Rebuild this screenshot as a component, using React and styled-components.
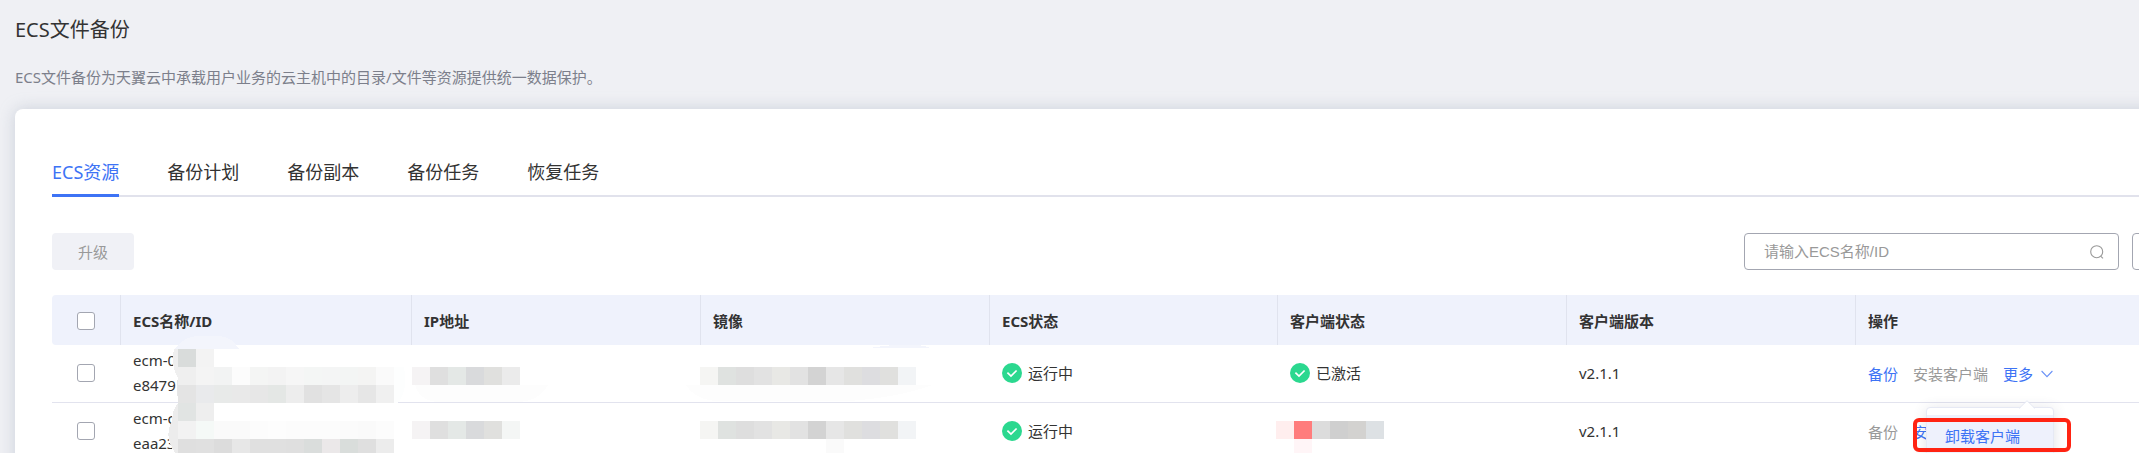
import React from "react";
import styled, { createGlobalStyle } from "styled-components";

const GlobalStyle = createGlobalStyle`
  *, *::before, *::after { box-sizing: border-box; }
  body {
    margin: 0;
    background: #eff0f4;
    color: #333;
    font: 15px/24px "Noto Sans", "Noto Sans CJK SC", sans-serif;
  }
  button, input { font: inherit; color: inherit; }
`;

const Page = styled.main`
  height: 100vh;
  overflow: hidden;
  padding: 15px 0 0 15px;
`;

const Title = styled.h1`
  margin: 0;
  font-size: 20px;
  line-height: 30px;
  font-weight: 400;
`;

const Description = styled.p`
  margin: 20px 0;
  color: #7c7f8b;
`;

/* The panel is wider than the window, so its right side runs out of view. */
const Panel = styled.section`
  margin-right: -67px;
  padding: 48px 37px;
  min-height: 480px;
  background: #fff;
  border-radius: 8px;
  box-shadow: 0 0 16px rgba(150, 160, 180, 0.4);
`;

const Tabs = styled.nav`
  display: flex;
  gap: 48px;
  border-bottom: 2px solid #e1e2ec;
`;

const Tab = styled.a`
  height: 40px;
  margin-bottom: -2px;
  border-bottom: 3px solid ${(p) => (p.$active ? "#3d73f5" : "transparent")};
  color: ${(p) => (p.$active ? "#3d73f5" : "#333")};
  font-size: 18px;
  line-height: 30px;
  text-decoration: none;
`;

const Toolbar = styled.div`
  display: flex;
  justify-content: space-between;
  padding: 36px 0 25px;
`;

const UpgradeButton = styled.button`
  width: 82px;
  height: 37px;
  border: 0;
  border-radius: 4px;
  background: #f0f1f6;
  color: #999;
`;

const Tools = styled.div`
  display: flex;
  gap: 13px;
`;

const SearchBox = styled.label`
  display: flex;
  align-items: center;
  width: 375px;
  height: 37px;
  padding: 0 14px 0 19px;
  border: 1px solid #a3a6b1;
  border-radius: 4px;
`;

const SearchInput = styled.input`
  flex: 1;
  min-width: 0;
  padding: 0;
  border: 0;
  outline: 0;
  background: none;
  font-family: "Liberation Sans", "Noto Sans CJK SC", sans-serif;
  &::placeholder { color: #999; opacity: 1; }
`;

const SquareButton = styled.button`
  width: 37px;
  height: 37px;
  border: 1px solid #a3a6b1;
  border-radius: 4px;
  background: #fff;
`;

const Table = styled.table`
  width: 100%;
  table-layout: fixed;
  border-spacing: 0;
  border-collapse: separate;
`;

const Col = styled.col`
  width: ${(p) => (p.$width ? `${p.$width}px` : "auto")};
`;

const HeadCell = styled.th`
  height: 50px;
  padding: 2px 12px 0;
  background: #eff2fc;
  border-right: 1px solid #e0e3ee;
  text-align: left;
  font-weight: 700;
  &:first-child { border-radius: 4px 0 0 4px; }
  &:last-child { border-right: 0; }
`;

const Cell = styled.td`
  position: relative;
  height: 58px;
  padding: 0 13px 2px 12px;
  border-bottom: 1px solid #e2e3ee;
`;

const Checkbox = styled.input`
  appearance: none;
  display: block;
  width: 18px;
  height: 18px;
  margin: 0 auto;
  border: 1px solid #a3a6b1;
  border-radius: 3px;
  background: #fff;
`;

const Line = styled.div`
  line-height: 25px;
`;

const Status = styled.span`
  display: flex;
  align-items: center;
  gap: 6px;
`;

const Actions = styled.div`
  display: flex;
  align-items: center;
  gap: 15px;
  padding-top: 2px;
`;

const Action = styled.button`
  display: flex;
  align-items: center;
  gap: 8px;
  padding: 0;
  border: 0;
  background: none;
  color: ${(p) => (p.disabled ? "#999" : "#3d73f5")};
`;

const MenuAnchor = styled.div`
  position: relative;
`;

const Menu = styled.div`
  position: absolute;
  z-index: 2;
  top: 45px;
  right: -1px;
  width: 128px;
  padding: 7px 0;
  border: 1px solid #e6e9f4;
  border-radius: 4px;
  background: #fff;
  box-shadow: 0 2px 14px rgba(60, 70, 100, 0.16);
`;

const MenuArrow = styled.svg`
  position: absolute;
  top: -8px;
  right: 18px;
`;

const MenuItem = styled.button`
  display: block;
  width: 100%;
  height: 42px;
  padding: 0 18px;
  border: 0;
  background: #eef1fc;
  color: #3d73f5;
  text-align: left;
`;

const Highlight = styled.div`
  position: absolute;
  top: 10px;
  left: -14px;
  width: 158px;
  height: 34px;
  border: 4px solid #ff2312;
  border-radius: 6px;
`;

const MosaicSvg = styled.svg`
  position: absolute;
  z-index: 1;
  top: ${(p) => p.$top}px;
  left: ${(p) => p.$left}px;
  overflow: visible;
`;

const SIZE = 18;

function Mosaic({ rows, top, left = 0, children }) {
  const columns = Math.max(...rows.map((r) => r.length));
  return (
    <MosaicSvg
      $top={top}
      $left={left}
      width={columns * SIZE}
      height={rows.length * SIZE}
      shapeRendering="crispEdges"
      aria-hidden="true"
    >
      {children}
      {rows.map((row, y) =>
        row.map((fill, x) =>
          fill ? (
            <rect key={`${x}-${y}`} x={x * SIZE} y={y * SIZE} width={SIZE} height={SIZE} fill={fill} />
          ) : null
        )
      )}
    </MosaicSvg>
  );
}

const W = "#ffffff";
const NAME_ONE = [
  ["#d9dcdb", "#f3f3f3", W, W],
  ["#efefef", "#f4f4f4", "#f2f3f3", "#fcfcfc", "#f4f5f4", "#f3f3f3", "#f6f6f6", "#f4f6f5", "#f4f5f5", "#f3f5f4", "#f4f4f3", "#fafafa"],
  ["#e4e4e4", "#e9eaec", "#e8eae9", "#e9e9e9", "#e7e7e7", "#e4e7e5", "#ededed", "#e1e1e1", "#e5e5e5", "#ededed", "#e6e6e6", "#f0f0f0"],
];
const NAME_TWO = [
  ["#e1e4e3", "#eeeeee", W, W],
  ["#f2f2f2", "#f5f9f7", "#fafafa", "#fafafa", "#fcfcfc", "#fdfdfd", "#fcfcfc", "#fcfcfc", "#fcfcfc", "#fbfbfb", "#fafafa", "#fcfcfc"],
  ["#dfdfdf", "#e0e0e0", "#dcdcdc", "#e7e7e7", "#e0e0e0", "#e0e0e0", "#dfdfdf", "#dadddc", "#ebe8e9", "#d9dddb", "#dfdfdf", "#ececec"],
];
const IP_ONE = [["#f5f3f4", "#dfdfdf", "#e4e8e6", "#d9dadc", "#e0e0de", "#ebebeb"]];
const IP_TWO = [["#f5f3f4", "#dfdfdf", "#e4e8e6", "#d9dadc", "#e0e0de", "#f4f6f5"]];
const IMAGE_ONE = [["#f5f5f3", "#dfe2e0", "#dedede", "#e2e2e2", "#e8e8e5", "#e2e2e2", "#d3d3d3", "#e6e6e6", "#e0e0de", "#dddde0", "#e0e0de", "#f2f4f6"]];
const IMAGE_TWO = [IMAGE_ONE[0], [null, null, null, null, null, null, null, "#fafafa"]];
const CLIENT_TWO = [
  ["#ffeeee", "#ff7c7c", "#dcdcdc", "#cfcfcf", "#d3d2d0", "#dde1e4"],
  [null, "#fff5f7"],
];

function CheckIcon() {
  return (
    <svg width="20" height="20" viewBox="0 0 20 20" aria-hidden="true">
      <circle cx="10" cy="10" r="10" fill="#2bd88f" />
      <path d="M5.4 9.6l3.6 3.5 5.6-5.6" fill="none" stroke="#fff" strokeWidth="1.7" />
    </svg>
  );
}

function SearchIcon() {
  return (
    <svg width="14" height="14" viewBox="0 0 14 14" fill="none" stroke="#999" strokeWidth="1.1" aria-hidden="true">
      <circle cx="6.7" cy="6.7" r="6" />
      <path d="M10.6 11.2l2.4 2.2" />
    </svg>
  );
}

function ChevronIcon() {
  return (
    <svg width="12" height="8" viewBox="0 0 12 8" fill="none" stroke="#6a92f7" strokeWidth="1.1" aria-hidden="true">
      <path d="M0.6 1l5.4 5.6L11.4 1" />
    </svg>
  );
}

function Running() {
  return (
    <Status>
      <CheckIcon />
      运行中
    </Status>
  );
}

const TABS = ["ECS资源", "备份计划", "备份副本", "备份任务", "恢复任务"];
const HEADINGS = ["ECS名称/ID", "IP地址", "镜像", "ECS状态", "客户端状态", "客户端版本", "操作"];
const WIDTHS = [69, 291, 289, 289, 288, 289, 289, 0];

export default function App() {
  return (
    <Page>
      <GlobalStyle />
      <Title>ECS文件备份</Title>
      <Description>ECS文件备份为天翼云中承载用户业务的云主机中的目录/文件等资源提供统一数据保护。</Description>
      <Panel>
        <Tabs>
          {TABS.map((name, i) => (
            <Tab key={name} href="#" $active={i === 0}>
              {name}
            </Tab>
          ))}
        </Tabs>
        <Toolbar>
          <UpgradeButton disabled>升级</UpgradeButton>
          <Tools>
            <SearchBox>
              <SearchInput type="text" placeholder="请输入ECS名称/ID" aria-label="ECS名称/ID" />
              <SearchIcon />
            </SearchBox>
            <SquareButton type="button" aria-label="刷新" />
          </Tools>
        </Toolbar>
        <Table>
          <colgroup>
            {WIDTHS.map((w, i) => (
              <Col key={i} $width={w} />
            ))}
          </colgroup>
          <thead>
            <tr>
              <HeadCell>
                <Checkbox type="checkbox" aria-label="全选" />
              </HeadCell>
              {HEADINGS.map((h) => (
                <HeadCell key={h}>{h}</HeadCell>
              ))}
            </tr>
          </thead>
          <tbody>
            <tr>
              <Cell>
                <Checkbox type="checkbox" aria-label="ecm-0" />
              </Cell>
              <Cell>
                <Line>ecm-0</Line>
                <Line>e8479</Line>
                <Mosaic rows={NAME_ONE} top={4} left={57}>
                  <path d="M-3 0Q6-13 22-13H42Q54-12 61 0Z" fill="#f3f5fc" />
                  <path d="M0 0H-4Q-8 16 0 29Z" fill="#efefef" />
                  <path d="M0 28Q-3 40 1 54H4V28Z" fill="#e6e6e6" />
                  <path d="M216 18H226Q230 42 220 54H216Z" fill="#fdfefe" />
                </Mosaic>
              </Cell>
              <Cell>
                <Mosaic rows={IP_ONE} top={22}>
                  <path d="M3 18H136Q126 35 105 35H26Q8 34 3 18Z" fill="#fdfdfd" />
                </Mosaic>
              </Cell>
              <Cell>
                <Mosaic rows={IMAGE_ONE} top={22} left={-1}>
                  <path d="M170-19Q214-26 230-19Z" fill="#f3f5fc" />
                  <path d="M-14 18H232Q200 30 150 34H20Q-4 34-14 18Z" fill="#fdfdfd" />
                </Mosaic>
              </Cell>
              <Cell>
                <Running />
              </Cell>
              <Cell>
                <Status>
                  <CheckIcon />
                  已激活
                </Status>
              </Cell>
              <Cell>v2.1.1</Cell>
              <Cell>
                <Actions>
                  <Action type="button">备份</Action>
                  <Action type="button" disabled>
                    安装客户端
                  </Action>
                  <MenuAnchor>
                    <Action type="button" aria-expanded="true">
                      更多
                      <ChevronIcon />
                    </Action>
                    <Menu>
                      <MenuArrow width="16" height="9" viewBox="0 0 16 9" aria-hidden="true">
                        <path d="M0 9L8 1l8 8z" fill="#fff" />
                        <path d="M0 8.5L8 0.7l8 7.8" fill="none" stroke="#e6e9f4" />
                      </MenuArrow>
                      <MenuItem type="button">卸载客户端</MenuItem>
                      <Highlight />
                    </Menu>
                  </MenuAnchor>
                </Actions>
              </Cell>
            </tr>
            <tr>
              <Cell>
                <Checkbox type="checkbox" aria-label="ecm-c" />
              </Cell>
              <Cell>
                <Line>ecm-c</Line>
                <Line>eaa23</Line>
                <Mosaic rows={NAME_TWO} top={0} left={57}>
                  <path d="M0 0Q-6 8-6 18Q-12 30-8 40Q-4 50 1 54H4V0Z" fill="#ececec" />
                </Mosaic>
              </Cell>
              <Cell>
                <Mosaic rows={IP_TWO} top={18} />
              </Cell>
              <Cell>
                <Mosaic rows={IMAGE_TWO} top={18} left={-1} />
              </Cell>
              <Cell>
                <Running />
              </Cell>
              <Cell>
                <Mosaic rows={CLIENT_TWO} top={18} left={-2} />
              </Cell>
              <Cell>v2.1.1</Cell>
              <Cell>
                <Actions>
                  <Action type="button" disabled>
                    备份
                  </Action>
                  <Action type="button">安</Action>
                </Actions>
              </Cell>
            </tr>
          </tbody>
        </Table>
      </Panel>
    </Page>
  );
}
